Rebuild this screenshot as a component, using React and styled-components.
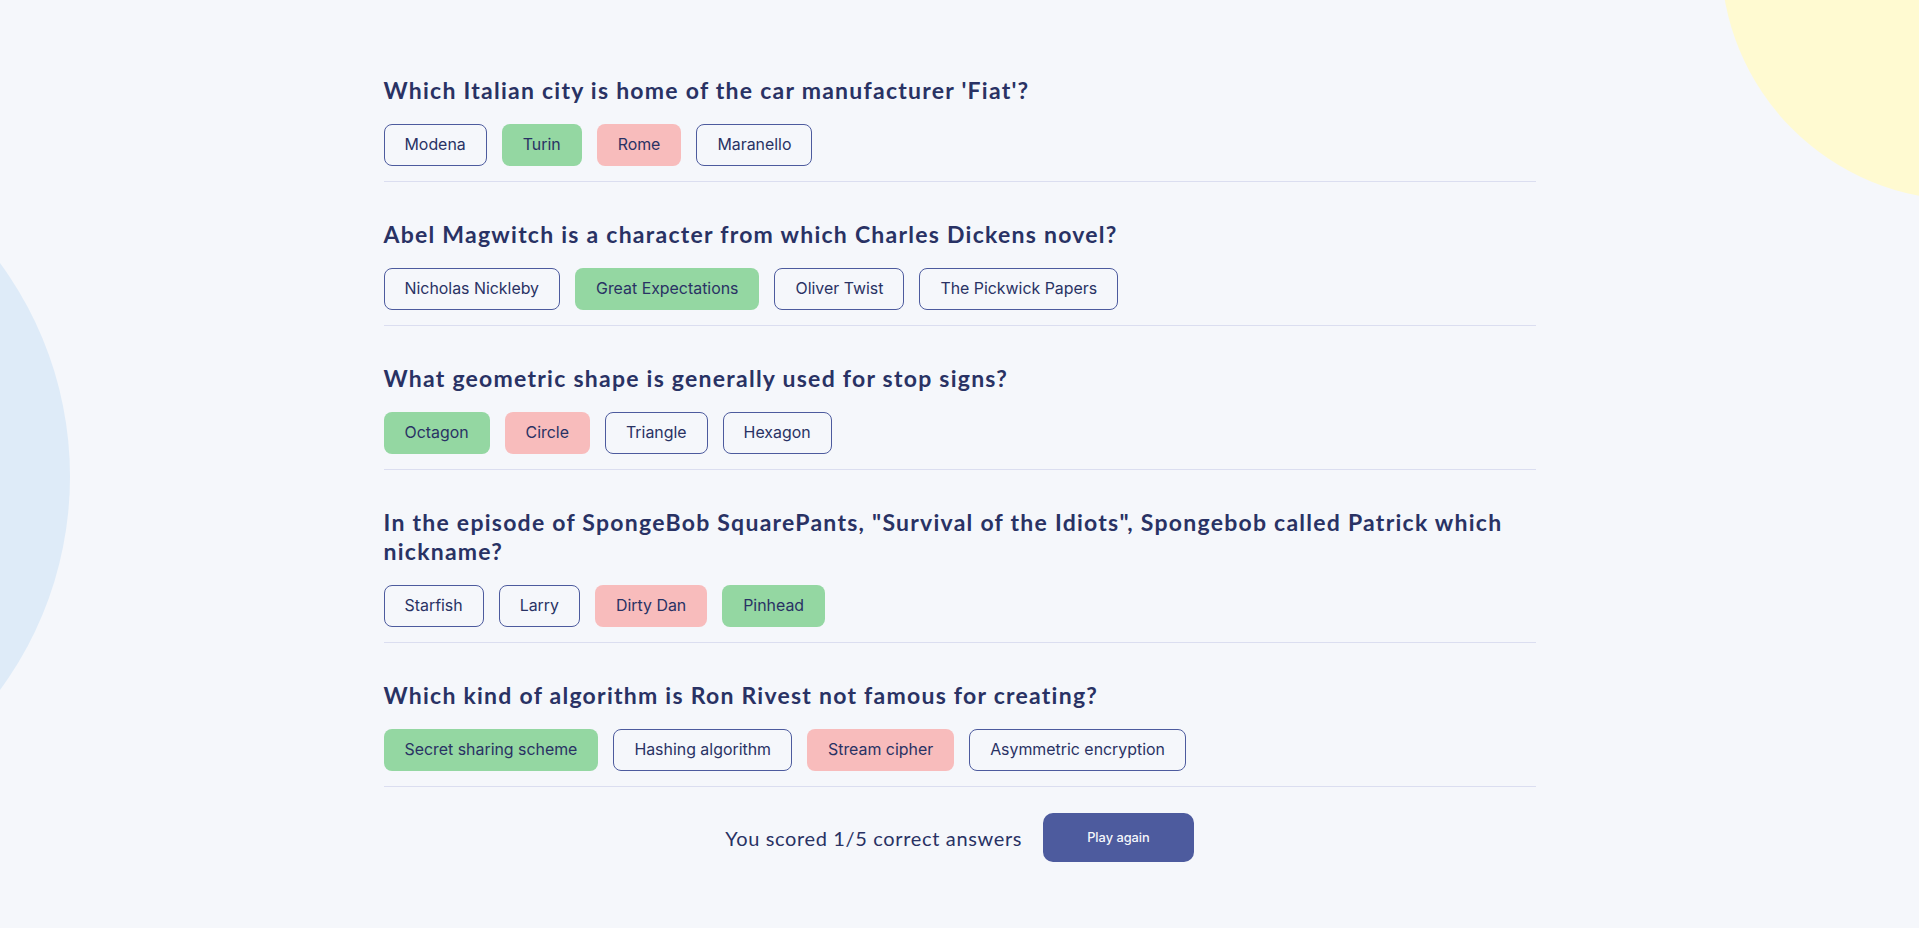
import React from 'react'
import styled, { createGlobalStyle } from 'styled-components'

const GlobalStyle = createGlobalStyle`
  * { box-sizing: border-box; }
  body {
    margin: 0;
    background: #F5F7FB;
    color: #293264;
    font-family: "Inter", "Liberation Sans", sans-serif;
  }
`

const questions = [
  {
    question: "Which Italian city is home of the car manufacturer 'Fiat'?",
    answers: [
      { text: 'Modena' },
      { text: 'Turin', state: 'correct' },
      { text: 'Rome', state: 'wrong' },
      { text: 'Maranello' },
    ],
  },
  {
    question: 'Abel Magwitch is a character from which Charles Dickens novel?',
    answers: [
      { text: 'Nicholas Nickleby' },
      { text: 'Great Expectations', state: 'correct' },
      { text: 'Oliver Twist' },
      { text: 'The Pickwick Papers' },
    ],
  },
  {
    question: 'What geometric shape is generally used for stop signs?',
    answers: [
      { text: 'Octagon', state: 'correct' },
      { text: 'Circle', state: 'wrong' },
      { text: 'Triangle' },
      { text: 'Hexagon' },
    ],
  },
  {
    question:
      'In the episode of SpongeBob SquarePants, "Survival of the Idiots", Spongebob called Patrick which nickname?',
    answers: [
      { text: 'Starfish' },
      { text: 'Larry' },
      { text: 'Dirty Dan', state: 'wrong' },
      { text: 'Pinhead', state: 'correct' },
    ],
  },
  {
    question: 'Which kind of algorithm is Ron Rivest not famous for creating?',
    answers: [
      { text: 'Secret sharing scheme', state: 'correct' },
      { text: 'Hashing algorithm' },
      { text: 'Stream cipher', state: 'wrong' },
      { text: 'Asymmetric encryption' },
    ],
  },
]

const App = () => {
  return (
    <Page>
      <GlobalStyle />
      <YellowBlob />
      <BlueBlob />
      <Quiz>
        {questions.map((q, i) => (
          <Question key={i}>
            <Title>{q.question}</Title>
            <Answers>
              {q.answers.map((a) => (
                <Answer key={a.text} state={a.state}>
                  {a.text}
                </Answer>
              ))}
            </Answers>
          </Question>
        ))}
        <Footer>
          <Score>You scored 1/5 correct answers</Score>
          <PlayButton>Play again</PlayButton>
        </Footer>
      </Quiz>
    </Page>
  )
}

export default App

const Page = styled.main`
  position: relative;
  min-height: 928px;
  overflow: hidden;
  padding-top: 38px;
`

// decorative blobs in the corners
const YellowBlob = styled.div`
  position: absolute;
  left: 1721px;
  top: -286px;
  width: 486px;
  height: 486px;
  border-radius: 50%;
  background: #FFFAD1;
`

const BlueBlob = styled.div`
  position: absolute;
  left: -651px;
  top: 116px;
  width: 721px;
  height: 721px;
  border-radius: 50%;
  background: #DEEBF8;
`

const Quiz = styled.div`
  position: relative;
  width: 1152px;
  margin: 0 auto;
`

const Question = styled.section`
  padding: 38px 0 15px;
  border-bottom: 1px solid #DBDEF0;
`

const Title = styled.h2`
  margin: 0 0 19px;
  font-family: "Lato", "Liberation Sans", sans-serif;
  font-weight: 700;
  font-size: 23px;
  line-height: 29px;
  letter-spacing: 1.25px;
  color: #293264;
`

const Answers = styled.div`
  display: flex;
  gap: 15px;
`

const Answer = styled.button`
  font-family: "Inter", "Liberation Sans", sans-serif;
  font-size: 15.9px;
  line-height: 20px;
  padding: 10px 20px;
  border-radius: 8px;
  color: #293264;
  border: 1px solid ${(p) => (p.state ? 'transparent' : '#4D5B9E')};
  background: ${(p) =>
    p.state === 'correct' ? '#94D7A2' : p.state === 'wrong' ? '#F8BCBC' : 'transparent'};
  cursor: pointer;
`

const Footer = styled.div`
  display: flex;
  justify-content: center;
  align-items: center;
  gap: 21px;
  padding-top: 26px;
`

const Score = styled.p`
  margin: 0;
  font-family: "Lato", "Liberation Sans", sans-serif;
  font-size: 20px;
  letter-spacing: 0.65px;
  color: #293264;
`

const PlayButton = styled.button`
  font-family: "Inter", "Liberation Sans", sans-serif;
  font-size: 12.8px;
  font-weight: 500;
  line-height: 17px;
  padding: 16px 44px;
  border: none;
  border-radius: 10px;
  background: #4D5B9E;
  color: #F5F7FB;
  cursor: pointer;
`
